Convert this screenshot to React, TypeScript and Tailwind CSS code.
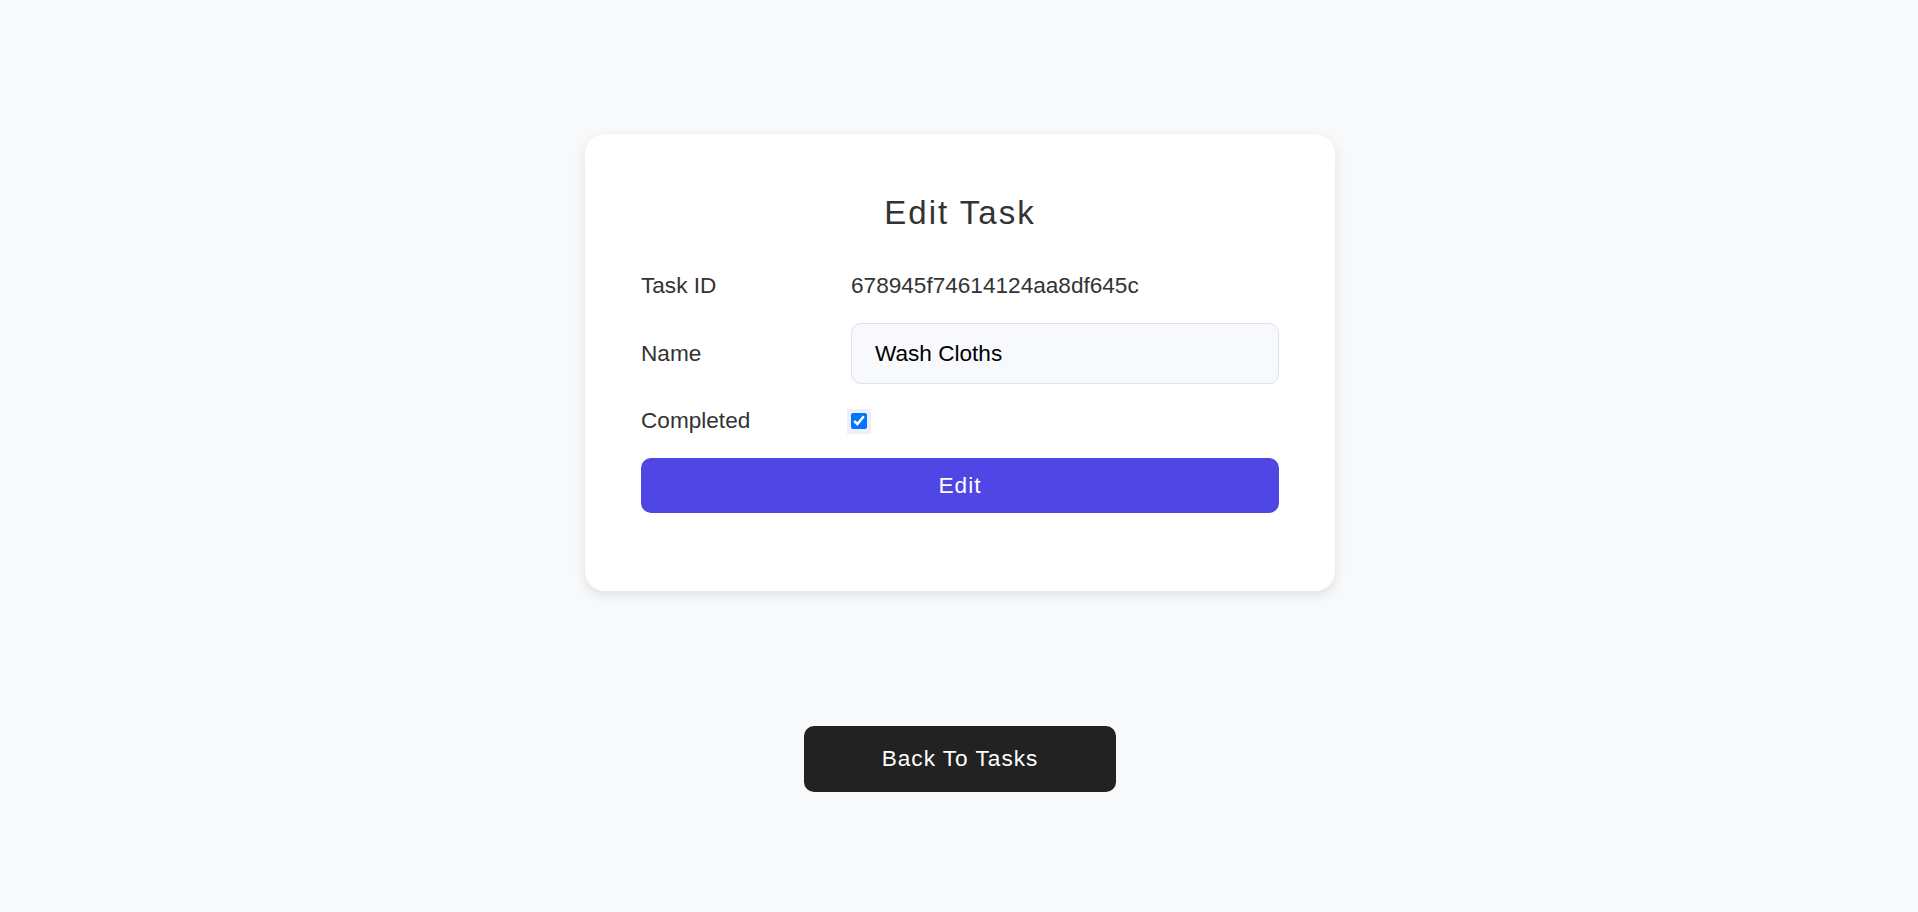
import React, { useState } from "react";

export default function App() {
  const [name, setName] = useState("Wash Cloths");
  const [completed, setCompleted] = useState(true);

  return (
    <div
      className="min-h-screen bg-[#f8f9fb] pt-[134px] flex flex-col items-center"
      style={{ fontFamily: '"Liberation Sans", Arial, sans-serif' }}
    >
      {/* card */}
      <div className="ml-[2px] w-[750px] rounded-[20px] bg-white px-[56px] pt-[60px] pb-[78px] shadow-[0_4px_12px_rgba(0,0,0,0.1)]">
        <h1 className="mb-[42px] text-center text-[33px] leading-[37px] tracking-[2px] text-[#333]">
          Edit Task
        </h1>

        <div className="flex flex-col gap-6 text-[22.6px] text-[#333]">
          <div className="flex items-center h-[26px]">
            <span className="w-[210px]">Task ID</span>
            <span>678945f74614124aa8df645c</span>
          </div>

          <div className="flex items-center">
            <label className="w-[210px]">Name</label>
            <input
              value={name}
              onChange={(e) => setName(e.target.value)}
              className="h-[61px] flex-1 rounded-[10px] border border-[#dde1ec] bg-[#f8f9fc] px-[23px] text-black outline-none"
            />
          </div>

          <div className="flex items-center h-[26px]">
            <label className="w-[206px]">Completed</label>
            <span className="flex h-[25px] w-[24px] items-center bg-[#eeeffa] pl-[4px]">
              <input
                type="checkbox"
                checked={completed}
                onChange={(e) => setCompleted(e.target.checked)}
                className="m-0 h-[16px] w-[16px]"
              />
            </span>
          </div>

          <button className="h-[55px] w-full rounded-[10px] bg-[#4f46e5] text-[22.6px] tracking-[1px] text-white">
            Edit
          </button>
        </div>
      </div>

      <button className="ml-[2px] mt-[135px] h-[66px] w-[312px] rounded-[10px] bg-[#222] text-[22.6px] tracking-[1px] text-white">
        Back To Tasks
      </button>
    </div>
  );
}
